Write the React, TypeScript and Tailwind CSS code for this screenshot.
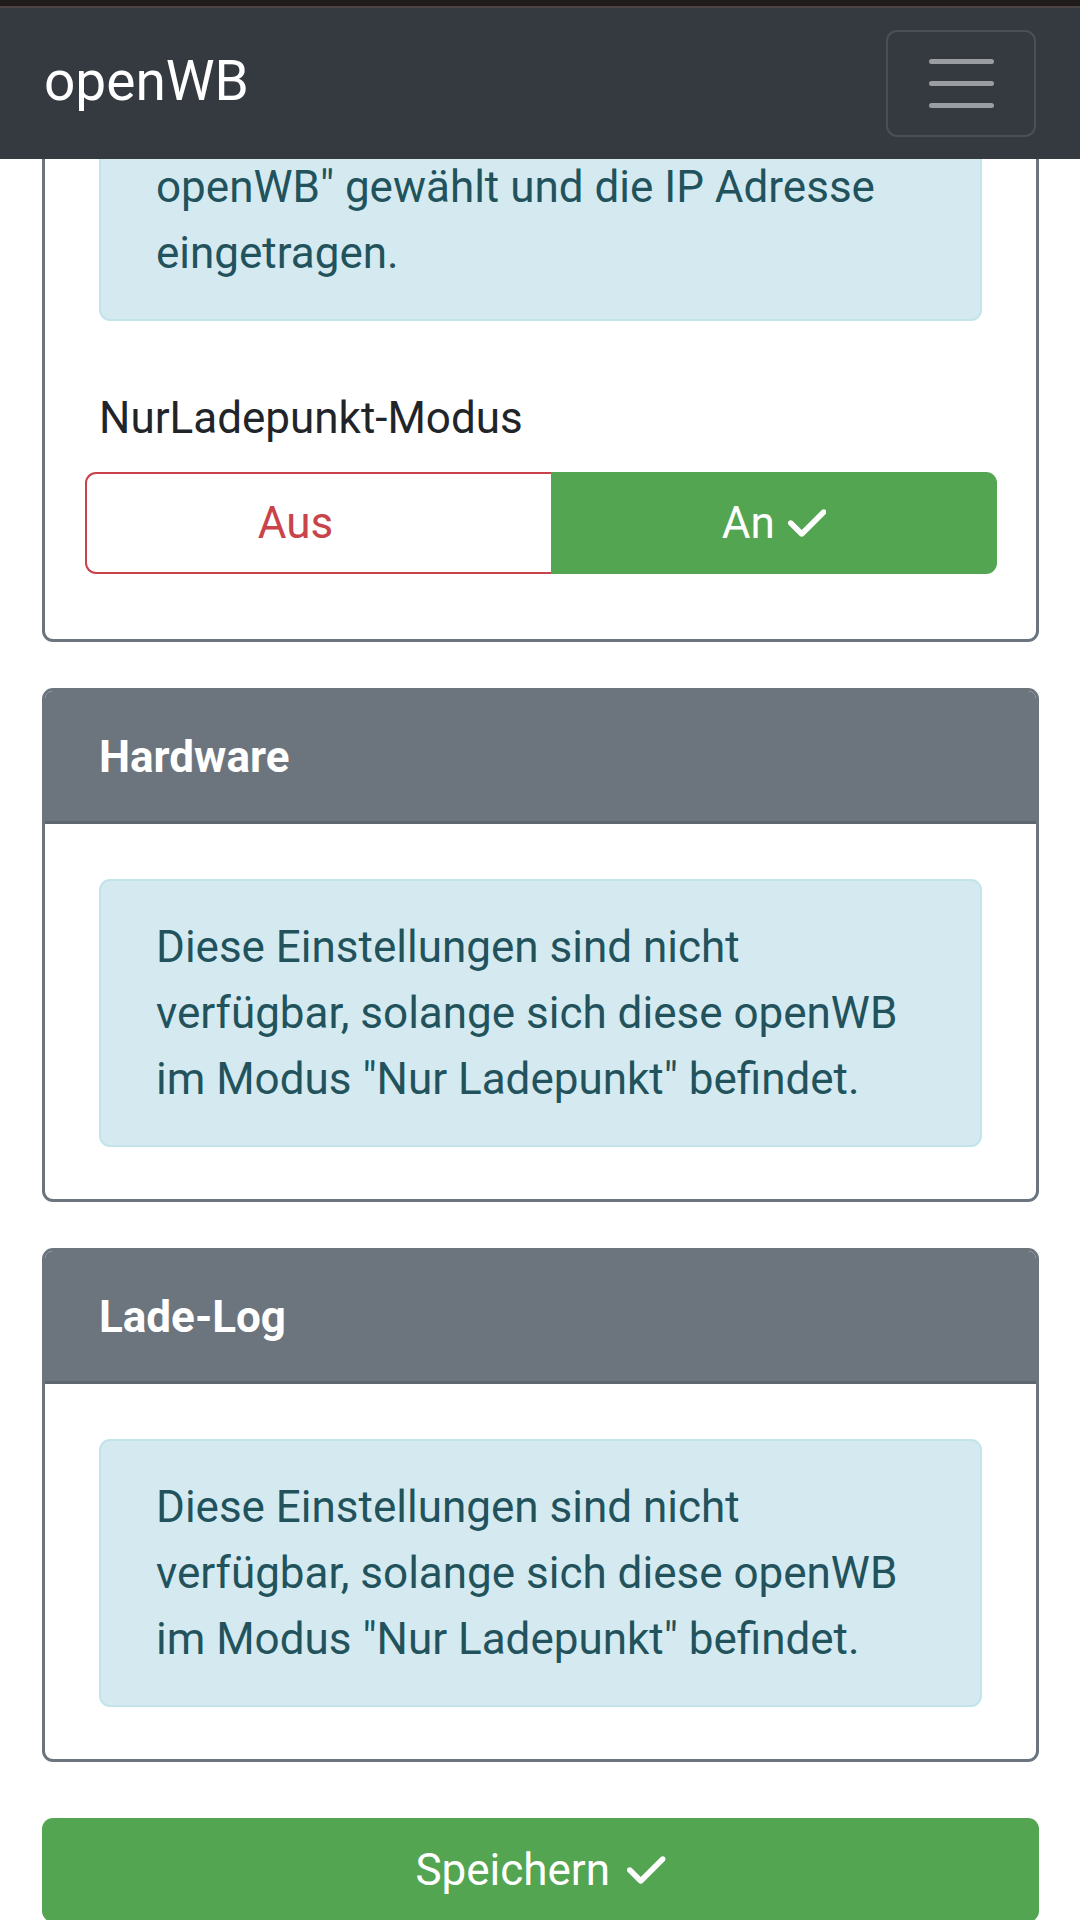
import { FaCheck } from "react-icons/fa6";

function InfoAlert({ children, extraTop = false }: { children: React.ReactNode; extraTop?: boolean }) {
  return (
    <div
      className={
        extraTop
          ? "rounded-[11px] border-2 border-[#c3e4eb] bg-[#d4eaf0] px-[55px] pt-[99px] pb-[33px] text-[44px] leading-[66px] text-[#22535d]"
          : "rounded-[11px] border-2 border-[#c3e4eb] bg-[#d4eaf0] px-[55px] py-[33px] text-[44px] leading-[66px] text-[#22535d]"
      }
    >
      {children}
    </div>
  );
}

function SectionCard({ title }: { title: string }) {
  return (
    <div className="mb-[46px] overflow-hidden rounded-[11px] border-[3px] border-[#6c757d]">
      <div className="border-b-[3px] border-[#5f676e] bg-[#6c757d] px-[54px] pt-[33px] pb-[31px] text-[44px] font-bold leading-[66px] text-white">
        {title}
      </div>
      <div className="px-[54px] pt-[55px] pb-[52px]">
        <InfoAlert>
          Diese Einstellungen sind nicht verfügbar, solange sich diese openWB im Modus "Nur Ladepunkt" befindet.
        </InfoAlert>
      </div>
    </div>
  );
}

export default function App() {
  return (
    <div className="flex h-[1920px] w-[1080px] flex-col overflow-hidden bg-white font-['Roboto',sans-serif]">
      <div className="h-[6px] shrink-0 bg-[#1f1b1b]" />
      <div className="h-[2px] shrink-0 bg-[#4d4545]" />
      <nav className="flex h-[151px] shrink-0 items-center justify-between bg-[#343a40] px-[44px]">
        <span className="mb-[5px] text-[55px] leading-[82px] text-white">openWB</span>
        <button className="flex h-[107px] w-[150px] flex-col items-center justify-center gap-[17px] rounded-[11px] border-2 border-[#4a5056]">
          <span className="block h-[5px] w-[65px] rounded-full bg-[#9a9da1]" />
          <span className="block h-[5px] w-[65px] rounded-full bg-[#9a9da1]" />
          <span className="block h-[5px] w-[65px] rounded-full bg-[#9a9da1]" />
        </button>
      </nav>
      <main className="flex-1 overflow-hidden pl-[42px] pr-[41px]">
        <div className="mt-[-164px] mb-[46px] rounded-[11px] border-[3px] border-[#6c757d]">
          <div className="px-[54px] pt-[55px] pb-[65px]">
            <InfoAlert extraTop>openWB" gewählt und die IP Adresse eingetragen.</InfoAlert>
            <div className="mt-[64px] text-[44px] leading-[66px] text-[#212529]">NurLadepunkt-Modus</div>
            <div className="mt-[21px] ml-[-14px] mr-[-15px] flex h-[102px]">
              <button className="flex flex-auto items-center justify-center rounded-l-[11px] border-2 border-r-0 border-[#c8434a] bg-white px-[33px] text-[44px] leading-[66px] text-[#c8434a]">
                Aus
                <FaCheck className="invisible ml-[13px] h-[44px] w-[34px]" />
              </button>
              <button className="flex flex-auto items-center justify-center rounded-r-[11px] bg-[#53a552] px-[33px] text-[44px] leading-[66px] text-white">
                An
                <FaCheck className="ml-[13px] h-[44px] w-[38.5px]" />
              </button>
            </div>
          </div>
        </div>
        <SectionCard title="Hardware" />
        <SectionCard title="Lade-Log" />
        <button className="mt-[56px] flex h-[104px] w-full items-center justify-center rounded-[11px] bg-[#53a552] text-[44px] leading-[66px] text-white">
          Speichern
          <FaCheck className="ml-[17px] h-[44px] w-[38.5px]" />
        </button>
      </main>
    </div>
  );
}
